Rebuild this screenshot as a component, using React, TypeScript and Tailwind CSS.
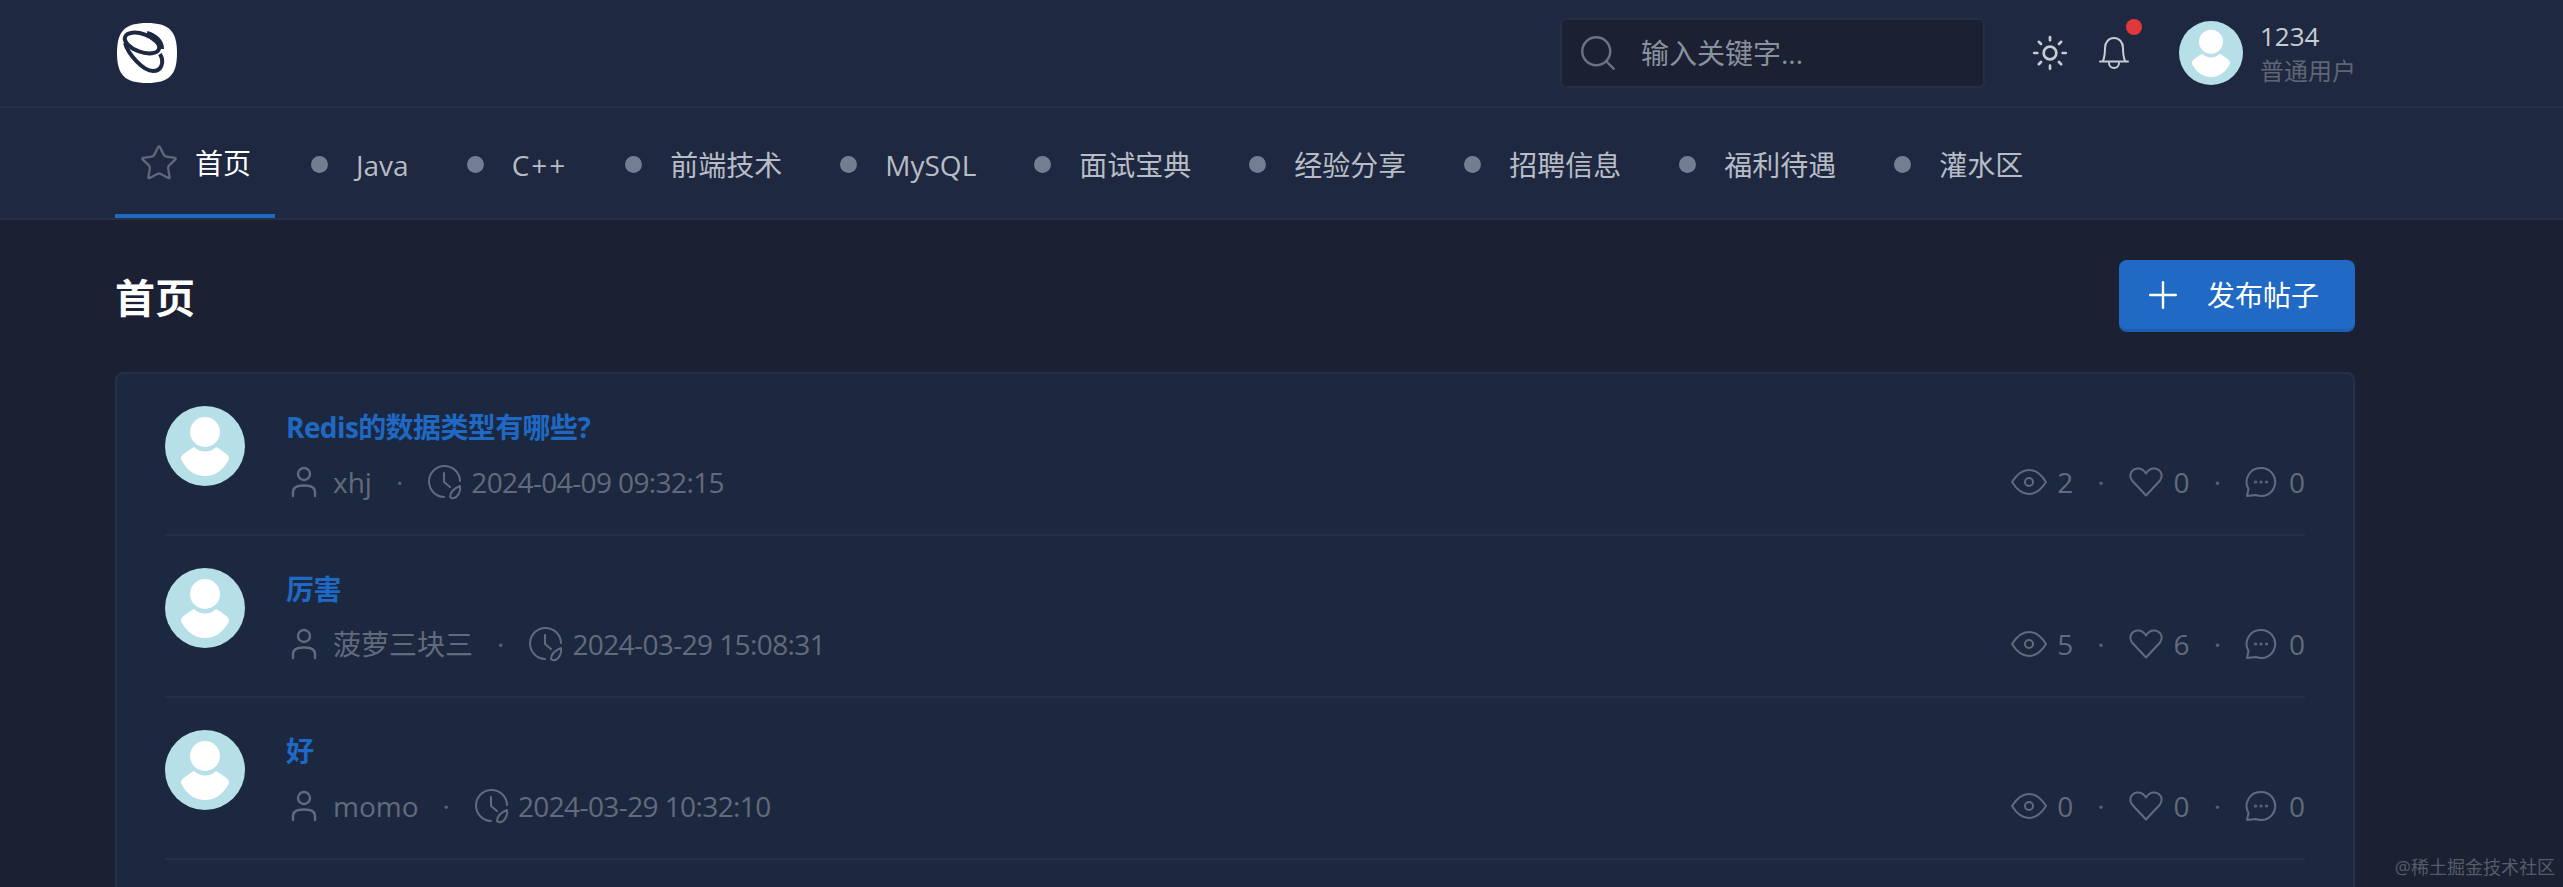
import { Star, Search, Sun, Plus } from 'lucide-react'

const FONT = "font-['Open_Sans','Noto_Sans_CJK_SC',sans-serif]"

const navItems = ['Java', 'C++', '前端技术', 'MySQL', '面试宝典', '经验分享', '招聘信息', '福利待遇', '灌水区']

const posts = [
  { title: 'Redis的数据类型有哪些?', author: 'xhj', time: '2024-04-09 09:32:15', views: 2, likes: 0, comments: 0 },
  { title: '厉害', author: '菠萝三块三', time: '2024-03-29 15:08:31', views: 5, likes: 6, comments: 0 },
  { title: '好', author: 'momo', time: '2024-03-29 10:32:10', views: 0, likes: 0, comments: 0 },
]

const Logo = () => (
  <svg width="60" height="60" viewBox="0 0 60 60">
    <path d="M30 0C52 0 60 8 60 30C60 52 52 60 30 60C8 60 0 52 0 30C0 8 8 0 30 0Z" fill="#fff" />
    <g fill="none" stroke="#1e2840" strokeWidth="4">
      <ellipse cx="25" cy="20" rx="18" ry="9" transform="rotate(20 25 20)" />
      <path d="M8 20C11 31 26 48 36 48C44 48 48 40 43 31" />
      <path d="M30 10C38 12 45 18 45 26" />
    </g>
  </svg>
)

const Avatar = ({ size }: { size: string }) => (
  <svg className={size} viewBox="0 0 80 80">
    <circle cx="40" cy="40" r="40" fill="#b7dfe8" />
    <circle cx="40" cy="26" r="15" fill="#fff" />
    <path d="M20 47C24 44 27 42 29 41C35 47 45 47 51 41C53 42 56 44 60 47C64 50 65 52 63 55C58 64 50 70 40 70C30 70 22 64 17 55C15 52 16 50 20 47Z" fill="#fff" />
  </svg>
)

const BellIcon = () => (
  <svg width="30" height="34" viewBox="0 0 30 34" fill="none" stroke="#c7ccd4" strokeWidth="2" strokeLinecap="round">
    <path d="M4 25C6 20 6 16 6 12C6 6 10 2 15 2C20 2 24 6 24 12C24 16 24 20 26 25" />
    <path d="M1 25.500H29" />
    <path d="M10 27A5 5 0 0 0 20 27" />
  </svg>
)

const PersonIcon = () => (
  <svg width="28" height="32" viewBox="0 0 28 32" fill="none" stroke="currentColor" strokeWidth="2.400" strokeLinecap="round">
    <circle cx="14" cy="8" r="6" />
    <path d="M3 30V26C3 22 7 19.500 14 19.500C21 19.500 25 22 25 26V30" />
  </svg>
)

const ClockLeafIcon = () => (
  <svg width="36" height="36" viewBox="0 0 36 36" fill="none" stroke="currentColor" strokeWidth="2" strokeLinecap="round" strokeLinejoin="round">
    <path d="M17 33A15.500 15.500 0 1 1 33 17" />
    <path d="M17 9V18L23 23" />
    <path d="M23 33C23 28 28 24 33 22C34 27 31 33 27 34C25 34.500 24 34 23 33Z" />
  </svg>
)

const EyeIcon = () => (
  <svg width="36" height="26" viewBox="0 0 36 26" fill="none" stroke="currentColor" strokeWidth="2" strokeLinejoin="round">
    <path d="M1 13C6 5 12 1 18 1C24 1 30 5 35 13C30 21 24 25 18 25C12 25 6 21 1 13Z" />
    <circle cx="18" cy="13" r="4" />
  </svg>
)

const HeartIcon = () => (
  <svg width="34" height="30" viewBox="0 0 34 30" fill="none" stroke="currentColor" strokeWidth="2" strokeLinejoin="round">
    <path d="M17 28.500L3 13.500C0 9 1 3 8 1.500C12 1 15 3 17 6.500C19 3 22 1 26 1.500C33 3 34 9 31 13.500Z" />
  </svg>
)

const CommentIcon = () => (
  <svg width="32" height="32" viewBox="0 0 32 32" fill="none" stroke="currentColor" strokeWidth="2" strokeLinejoin="round">
    <path d="M16 2A14 14 0 1 1 11 29L2 30L3.500 23A14 14 0 0 1 16 2Z" />
    <circle cx="10.500" cy="16" r="0.600" />
    <circle cx="16" cy="16" r="0.600" />
    <circle cx="21.500" cy="16" r="0.600" />
  </svg>
)

const Dot = () => <span className="text-[#5a6272]">·</span>

const PostRow = ({ post }: { post: (typeof posts)[number] }) => (
  <div className="flex h-[162px] border-b-2 border-[#263149] pt-[32px]">
    <Avatar size="h-[80px] w-[80px] shrink-0" />
    <div className="ml-[41px] flex-1">
      <div className="-mt-[1px] h-[44px] text-[28px] leading-[44px] font-bold tracking-[-0.6px] text-[#1f69c4]">{post.title}</div>
      <div className="mt-[11px] flex h-[44px] items-center justify-between text-[28px] text-[#626b7b]">
        <div className="flex items-center">
          <span className="ml-[4px]"><PersonIcon /></span>
          <span className="ml-[15px]">{post.author}</span>
          <span className="mx-[24px]"><Dot /></span>
          <ClockLeafIcon />
          <span className="ml-[8px] tracking-[-0.6px]">{post.time}</span>
        </div>
        <div className="flex items-center">
          <EyeIcon />
          <span className="ml-[10px]">{post.views}</span>
          <span className="mx-[24px]"><Dot /></span>
          <HeartIcon />
          <span className="ml-[11px]">{post.likes}</span>
          <span className="mx-[24px]"><Dot /></span>
          <CommentIcon />
          <span className="ml-[12px]">{post.comments}</span>
        </div>
      </div>
    </div>
  </div>
)

export default function App() {
  return (
    <div className={`${FONT} relative h-[887px] w-[2563px] overflow-hidden bg-[#1b2132]`}>
      <header className="h-[220px] border-b-2 border-[#263149] bg-[#1e2840]">
        <div className="flex h-[108px] items-center border-b-2 border-[#263149] pr-[207px] pl-[117px]">
          <Logo />
          <div className="ml-auto flex h-[70px] w-[425px] items-center rounded-md border-2 border-[#242e45] bg-[#1b2132] pl-[15px] text-[28px] text-[#8a919e]">
            <Search size={42} strokeWidth={1.4} className="text-[#6b7383]" />
            <span className="ml-[22px]">输入关键字...</span>
          </div>
          <Sun size={38} strokeWidth={1.7} className="ml-[46px] text-[#c7ccd4]" />
          <div className="relative ml-[30px]">
            <BellIcon />
            <span className="absolute -top-[17px] -right-[13px] h-[16px] w-[16px] rounded-full bg-[#e0393b]" />
          </div>
          <Avatar size="ml-[50px] h-[64px] w-[64px] shrink-0" />
          <div className="ml-[17px]">
            <div className="text-[26px] leading-[36px] text-[#c7ccd4]">1234</div>
            <div className="text-[24px] leading-[34px] text-[#5e6675]">普通用户</div>
          </div>
        </div>
        <nav className="flex h-[110px] items-center pl-[115px] text-[28px] text-[#b7bcc5]">
          <div className="flex h-full w-[160px] items-center justify-center border-b-4 border-[#1f69c4] pt-[4px] text-white">
            <Star size={40} strokeWidth={1.4} className="mr-[16px] text-[#5e6878]" />
            <span>首页</span>
          </div>
          {navItems.map((item) => (
            <div key={item} className="ml-[36px] flex items-center pt-[3px] first:ml-[35px]">
              <span className="mr-[28px] h-[17px] w-[17px] rounded-full bg-[#737e92]" />
              <span className={item === 'C++' ? 'tracking-[2px]' : ''}>{item}</span>
              <span className="w-[22px]" />
            </div>
          ))}
        </nav>
      </header>
      <main className="w-[2355px] pl-[115px]">
        <div className="flex h-[152px] items-center justify-between">
          <h1 className="mt-[3px] text-[40px] font-bold text-white">首页</h1>
          <button className="flex h-[72px] w-[236px] items-center justify-center rounded-lg border-b-[3px] border-[#1c5fb0] bg-[#2069c4] pr-[14px] text-[28px] text-white">
            <Plus size={44} strokeWidth={1.3} />
            <span className="ml-[22px]">发布帖子</span>
          </button>
        </div>
        <div className="h-[600px] rounded-t-lg border-2 border-[#263149] bg-[#1c2840] px-[48px]">
          {posts.map((post) => (
            <PostRow key={post.title} post={post} />
          ))}
        </div>
      </main>
      <div className="absolute right-[8px] bottom-[6px] text-[18px] text-[#555d6a]">@稀土掘金技术社区</div>
    </div>
  )
}
